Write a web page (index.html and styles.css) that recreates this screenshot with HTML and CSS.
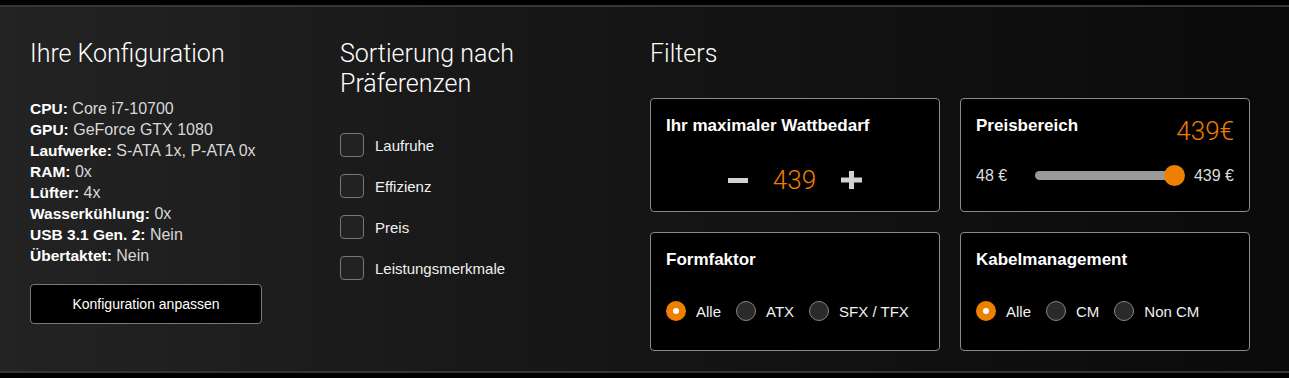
FILE: index.html
```html
<!DOCTYPE html>
<html lang="de">
<head>
  <meta charset="UTF-8">
  <meta name="viewport" content="width=device-width, initial-scale=1.0">
  <title>Netzteil-Konfigurator</title>
  <link rel="stylesheet" href="styles.css">
</head>
<body>
  <div class="panel">
    <section class="col config">
      <h2>Ihre Konfiguration</h2>
      <ul class="specs">
        <li><b>CPU:</b> Core i7-10700</li>
        <li><b>GPU:</b> GeForce GTX 1080</li>
        <li><b>Laufwerke:</b> S-ATA 1x, P-ATA 0x</li>
        <li><b>RAM:</b> 0x</li>
        <li><b>Lüfter:</b> 4x</li>
        <li><b>Wasserkühlung:</b> 0x</li>
        <li><b>USB 3.1 Gen. 2:</b> Nein</li>
        <li><b>Übertaktet:</b> Nein</li>
      </ul>
      <button class="btn-outline">Konfiguration anpassen</button>
    </section>

    <section class="col sort">
      <h2>Sortierung nach Präferenzen</h2>
      <ul class="checks">
        <li><span class="box"></span>Laufruhe</li>
        <li><span class="box"></span>Effizienz</li>
        <li><span class="box"></span>Preis</li>
        <li><span class="box"></span>Leistungsmerkmale</li>
      </ul>
    </section>

    <section class="col filters">
      <h2>Filters</h2>
      <div class="filter-grid">
        <div class="card">
          <h4>Ihr maximaler Wattbedarf</h4>
          <div class="stepper">
            <span class="minus"></span>
            <span class="watt">439</span>
            <svg class="plus" width="21" height="18" viewBox="0 0 21 18">
              <rect x="0" y="6.5" width="21" height="5" fill="#d2d2d2"/>
              <rect x="8" y="0" width="5" height="18" fill="#d2d2d2"/>
            </svg>
          </div>
        </div>

        <div class="card">
          <div class="card-head">
            <h4>Preisbereich</h4>
            <span class="price">439€</span>
          </div>
          <div class="slider">
            <span>48 €</span>
            <div class="track"><span class="thumb"></span></div>
            <span>439 €</span>
          </div>
        </div>

        <div class="card">
          <h4>Formfaktor</h4>
          <div class="radios">
            <span class="radio on"></span><span class="lbl">Alle</span>
            <span class="radio"></span><span class="lbl">ATX</span>
            <span class="radio"></span><span class="lbl">SFX / TFX</span>
          </div>
        </div>

        <div class="card">
          <h4>Kabelmanagement</h4>
          <div class="radios">
            <span class="radio on"></span><span class="lbl">Alle</span>
            <span class="radio"></span><span class="lbl">CM</span>
            <span class="radio"></span><span class="lbl">Non CM</span>
          </div>
        </div>
      </div>
    </section>
  </div>
</body>
</html>
```

FILE: styles.css
```css
body {
  margin: 0;
  padding-top: 5px;
  background-color: #000;
  color: #e4e4e4;
  font-family: "Liberation Sans", Arial, sans-serif;
}
.panel {
  display: grid;
  grid-template-columns: 310px 310px 600px;
  padding: 32px 0 20px 30px;
  border-top: 2px solid #363636;
  border-bottom: 2px solid #363636;
  background: linear-gradient(to right, #232323, #161616 45%, #0a0a0a);
}
h2 {
  margin: 0 0 29px;
  font-family: Roboto, "Liberation Sans", sans-serif;
  font-size: 25px;
  font-weight: 300;
  line-height: 30px;
  color: #fff;
}
ul {
  list-style: none;
  margin: 0;
  padding: 0;
}
.specs li {
  font-size: 16px;
  line-height: 21px;
  color: #d8d8d8;
}
.specs b {
  font-size: 15.5px;
  color: #fff;
}
.btn-outline {
  margin-top: 18px;
  width: 232px;
  height: 40px;
  background-color: #000;
  color: #fff;
  border: 1px solid #7a7a7a;
  border-radius: 4px;
  font-family: inherit;
  font-size: 14px;
  cursor: pointer;
}
.sort h2 {
  max-width: 220px;
}
.checks {
  margin-top: 34px;
}
.checks li {
  display: flex;
  align-items: center;
  gap: 11px;
  height: 24px;
  margin-bottom: 17px;
  font-size: 15px;
  color: #f0f0f0;
}
.box {
  width: 22px;
  height: 22px;
  border: 1px solid #777;
  border-radius: 4px;
  background-color: #222;
}
.filter-grid {
  display: grid;
  grid-template-columns: 290px 290px;
  grid-template-rows: 114px 119px;
  gap: 20px;
}
.card {
  padding: 17px 15px 0;
  border: 1px solid #8a8a8a;
  border-radius: 4px;
  background-color: #000;
}
.card h4 {
  margin: 0;
  font-size: 17px;
  line-height: 20px;
  color: #fff;
}
.stepper {
  display: flex;
  align-items: center;
  justify-content: center;
  gap: 25px;
  height: 30px;
  margin-top: 29px;
}
.minus {
  width: 20px;
  height: 5px;
  background-color: #d2d2d2;
}
.watt, .price {
  font-family: Roboto, "Liberation Sans", sans-serif;
  font-size: 26px;
  font-weight: 300;
  line-height: 30px;
  color: #ee7d00;
}
.card-head {
  display: flex;
  justify-content: space-between;
  align-items: flex-start;
}
.slider {
  display: flex;
  align-items: center;
  height: 21px;
  margin-top: 19px;
  font-size: 16px;
  color: #dcdcdc;
}
.track {
  position: relative;
  flex: 1;
  height: 9px;
  margin: 0 10px 0 28px;
  border-radius: 5px;
  background-color: #9a9a9a;
}
.thumb {
  position: absolute;
  right: -1px;
  top: -6px;
  width: 21px;
  height: 21px;
  border-radius: 50%;
  background-color: #ee8000;
}
.radios {
  display: flex;
  align-items: center;
  height: 20px;
  margin-top: 31px;
  font-size: 15px;
  color: #f0f0f0;
  white-space: nowrap;
}
.radio {
  flex-shrink: 0;
  box-sizing: border-box;
  width: 20px;
  height: 20px;
  margin-right: 10px;
  border: 1px solid #858585;
  border-radius: 50%;
  background-color: #2a2a2a;
}
.radio.on {
  border: 7px solid #ee8000;
  background-color: #fff;
}
.lbl {
  margin-right: 15px;
}
.lbl:last-child {
  margin-right: 0;
}
```
